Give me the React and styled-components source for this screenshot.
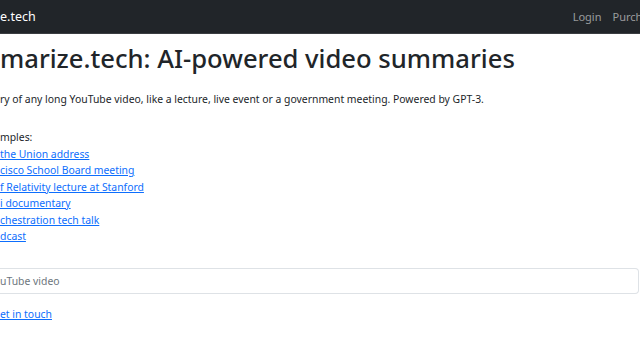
import React from "react";
import styled, { createGlobalStyle } from "styled-components";

const Global = createGlobalStyle`
  html, body {
    margin: 0;
    padding: 0;
    background: #ffffff;
    overflow: hidden;
  }
  body {
    font-family: "Noto Sans", "Open Sans", sans-serif;
    color: #212529;
  }
`;

const Navbar = styled.nav`
  box-sizing: border-box;
  height: 34px;
  background-color: #212529;
  border-bottom: 1px solid #3a3d41;
  display: flex;
  align-items: center;
  justify-content: space-between;
  overflow: hidden;
`;

const Brand = styled.div`
  color: #ffffff;
  font-size: 12.5px;
  white-space: nowrap;
`;

const NavLinks = styled.div`
  display: flex;
  gap: 11px;
  white-space: nowrap;
  margin-right: -20px;
`;

const NavLink = styled.a`
  color: rgba(255, 255, 255, 0.55);
  font-size: 11px;
  text-decoration: none;
`;

const Main = styled.main`
  padding-top: 9px;
`;

const Title = styled.h1`
  margin: 0;
  font-size: 25.6px;
  font-weight: 500;
  line-height: 31px;
  white-space: nowrap;
`;

const Lead = styled.p`
  margin: 17px 0 0;
  font-size: 10.4px;
  line-height: 16.5px;
  white-space: nowrap;
`;

const Examples = styled.div`
  margin-top: 21.5px;
  font-size: 10.4px;
  line-height: 16.5px;
`;

const Label = styled.div`
  color: #212529;
`;

const LinkList = styled.ul`
  list-style: none;
  margin: 0;
  padding: 0;
`;

const Link = styled.a`
  color: #0d6efd;
  text-decoration: underline;
  white-space: nowrap;
`;

const Input = styled.input`
  display: block;
  box-sizing: border-box;
  margin-top: 23px;
  width: 639px;
  height: 26px;
  padding: 0;
  border: 1px solid #dee2e6;
  border-left: none;
  border-radius: 0 4px 4px 0;
  font-family: inherit;
  font-size: 10.4px;
  color: #212529;
  background: #ffffff;
  outline: none;
  &::placeholder {
    color: #6c757d;
  }
`;

const Footer = styled.div`
  margin-top: 12px;
  font-size: 10.4px;
  line-height: 16.5px;
`;

const examples = [
  "the Union address",
  "cisco School Board meeting",
  "f Relativity lecture at Stanford",
  "i documentary",
  "chestration tech talk",
  "dcast",
];

export default function App() {
  return (
    <>
      <Global />
      <Navbar>
        <Brand>e.tech</Brand>
        <NavLinks>
          <NavLink href="#">Login</NavLink>
          <NavLink href="#">Purchase</NavLink>
        </NavLinks>
      </Navbar>
      <Main>
        <Title>marize.tech: AI-powered video summaries</Title>
        <Lead>
          ry of any long YouTube video, like a lecture, live event or a
          government meeting. Powered by GPT-3.
        </Lead>
        <Examples>
          <Label>mples:</Label>
          <LinkList>
            {examples.map((t) => (
              <li key={t}>
                <Link href="#">{t}</Link>
              </li>
            ))}
          </LinkList>
        </Examples>
        <Input placeholder="uTube video" />
        <Footer>
          <Link href="#">et in touch</Link>
        </Footer>
      </Main>
    </>
  );
}
